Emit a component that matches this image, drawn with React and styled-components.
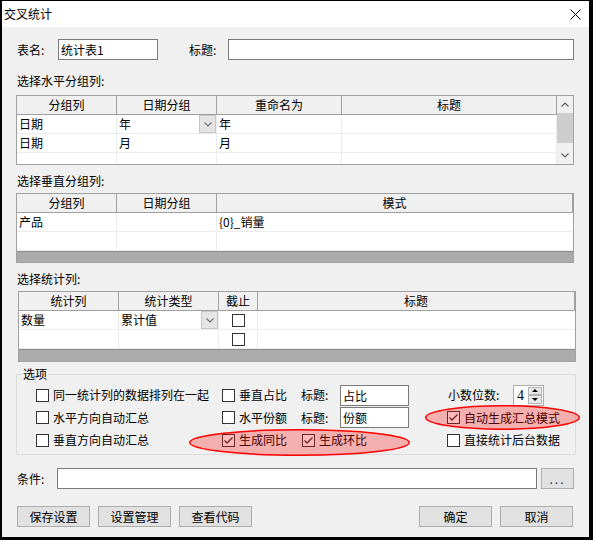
import React from 'react';
import styled, { createGlobalStyle } from 'styled-components';

const GlobalStyle = createGlobalStyle`
  html, body { margin: 0; padding: 0; background: #ffffff; }
  body {
    font-family: "Noto Sans CJK SC", "Noto Sans", sans-serif;
    font-size: 12px;
    color: #000;
  }
  *, *::before, *::after { box-sizing: border-box; }
`;

const Window = styled.div`
  position: relative;
  width: 593px;
  height: 540px;
  border-style: solid;
  border-color: #000;
  border-width: 1px 4px 3px 2px;
  background: #f0f0f0;
  display: flex;
  flex-direction: column;
  overflow: hidden;
`;

const TitleBar = styled.div`
  height: 26px;
  flex-shrink: 0;
  background: #fff;
  display: flex;
  align-items: center;
  justify-content: space-between;
  padding: 0 8px 0 2px;
`;

const Title = styled.span`
  line-height: 16px;
`;

const Body = styled.div`
  flex: 1;
  display: flex;
  flex-direction: column;
  padding: 0 15px 0 14px;
`;

const FieldRow = styled.div`
  display: flex;
  align-items: center;
  height: 21px;
  flex-shrink: 0;
  margin-top: ${p => p.$top || 0}px;
`;

const FieldLabel = styled.span`
  width: ${p => p.$w}px;
  flex-shrink: 0;
  padding-left: ${p => (p.$pad === undefined ? 1 : p.$pad)}px;
  margin-left: ${p => p.$gap || 0}px;
  line-height: 16px;
  white-space: nowrap;
`;

const TextBox = styled.input`
  width: ${p => (p.$w ? `${p.$w}px` : 'auto')};
  flex: ${p => (p.$w ? '0 0 auto' : '1 1 auto')};
  min-width: 0;
  height: 21px;
  margin: 0;
  background: #fff;
  border: 1px solid #7a7a7a;
  padding: 0 2px;
  font: inherit;
  color: #000;
  outline: none;
`;

const SectionLabel = styled.div`
  height: 16px;
  line-height: 16px;
  padding-left: 1px;
  flex-shrink: 0;
  margin: ${p => p.$top}px 0 ${p => p.$bottom}px;
`;

const GridFrame = styled.div`
  display: flex;
  width: 558px;
  height: ${p => p.$h}px;
  margin-left: ${p => p.$shift || 0}px;
  border: 1px solid #a0a0a0;
  background: #fff;
  overflow: hidden;
  flex-shrink: 0;
`;

const GridMain = styled.div`
  flex: 1;
  display: flex;
  flex-direction: column;
  min-width: 0;
`;

const GridRows = styled.div`
  display: grid;
  grid-template-columns: ${p => p.$cols};
  grid-auto-rows: 19px;
`;

const HeadCell = styled.div`
  background: #f0f0f0;
  border-right: 1px solid #a0a0a0;
  border-bottom: 1px solid #a0a0a0;
  text-align: center;
  line-height: 18px;
  white-space: nowrap;
`;

const Cell = styled.div`
  display: flex;
  align-items: center;
  justify-content: ${p => (p.$center ? 'center' : 'space-between')};
  border-right: ${p => (p.$last ? 'none' : '1px solid #ececec')};
  border-bottom: 1px solid #ececec;
  padding-left: ${p => (p.$center ? 0 : 2)}px;
  line-height: 18px;
  white-space: nowrap;
  overflow: hidden;
`;

const Band = styled.div`
  flex: 1;
  background: #ababab;
  border-top: 1px solid #8c8c8c;
`;

const ComboButton = styled.span`
  width: 17px;
  height: 18px;
  flex-shrink: 0;
  display: flex;
  align-items: center;
  justify-content: center;
  background: #e5e5e5;
  border: 1px solid #c6c6c6;
`;

const VScroll = styled.div`
  width: 16px;
  flex-shrink: 0;
  background: #f0f0f0;
  display: flex;
  flex-direction: column;
`;

const ScrollArrow = styled.div`
  height: 17px;
  display: flex;
  align-items: center;
  justify-content: center;
`;

const ScrollThumb = styled.div`
  height: 30px;
  background: #cdcdcd;
`;

const ScrollTrack = styled.div`
  flex: 1;
`;

const CheckBox = styled.span`
  width: 13px;
  height: 13px;
  flex-shrink: 0;
  display: inline-flex;
  align-items: center;
  justify-content: center;
  background: #fff;
  border: 1px solid #333;
`;

const GroupBox = styled.fieldset`
  margin: 4px 0 0;
  padding: 2px 0 3px;
  width: 560px;
  min-width: 0;
  flex-shrink: 0;
  border: 1px solid #dcdcdc;
`;

const GroupTitle = styled.legend`
  margin-left: 5px;
  padding: 0 1px;
  height: 16px;
  line-height: 16px;
`;

const OptionGrid = styled.div`
  display: grid;
  grid-template-columns: 186px 79px 146px 1fr;
  grid-template-rows: 22px 23px 22px;
  margin-left: 19px;
`;

const CheckItem = styled.label`
  display: flex;
  align-items: center;
  gap: 4px;
  padding-left: ${p => p.$pad || 0}px;
  white-space: nowrap;
  line-height: 16px;
`;

const InlineField = styled.div`
  display: flex;
  align-items: center;
`;

const SmallInput = styled.input`
  width: 69px;
  height: 21px;
  margin: 0;
  border: 1px solid #7a7a7a;
  background: #fff;
  padding: 0 2px;
  font: inherit;
  color: #000;
  outline: none;
`;

const Spinner = styled.div`
  display: flex;
  width: 31px;
  height: 21px;
  border: 1px solid #adadad;
  background: #fff;
  padding: 1px;
`;

const SpinValue = styled.span`
  flex: 1;
  font-family: "Liberation Serif", serif;
  font-size: 14px;
  line-height: 17px;
  padding-left: 2px;
`;

const SpinButtons = styled.div`
  width: 14px;
  display: flex;
  flex-direction: column;
`;

const SpinButton = styled.span`
  flex: 1;
  display: flex;
  align-items: center;
  justify-content: center;
  background: #e8e8e8;
  border: 1px solid #b4b4b4;
`;

const Annotation = styled.svg`
  position: absolute;
  left: ${p => p.$x}px;
  top: ${p => p.$y}px;
  pointer-events: none;
  overflow: visible;
`;

const DotsButton = styled.button`
  width: 33px;
  height: 21px;
  margin: 0 0 0 4px;
  padding: 0;
  flex-shrink: 0;
  background: #e1e1e1;
  border: 1px solid #adadad;
  font: inherit;
  color: #333;
  letter-spacing: 2px;
  line-height: 17px;
`;

const ButtonRow = styled.div`
  display: flex;
  gap: 8px;
  height: 21px;
  margin: 17px 1px 0 1px;
  flex-shrink: 0;
`;

const PushButton = styled.button`
  width: 73px;
  height: 21px;
  margin: 0;
  padding: 0;
  background: #e1e1e1;
  border: 1px solid #adadad;
  font: inherit;
  color: #000;
  line-height: 17px;
`;

const Spacer = styled.div`
  flex: 1;
`;

const Chevron = ({ up, color = '#606060' }) => (
  <svg width="8" height="5" viewBox="0 0 8 5">
    <polyline
      points={up ? '0.5,4.5 4,1 7.5,4.5' : '0.5,0.5 4,4 7.5,0.5'}
      fill="none"
      stroke={color}
      strokeWidth="1.2"
    />
  </svg>
);

const Triangle = ({ up }) => (
  <svg width="6" height="3" viewBox="0 0 6 3">
    <polygon points={up ? '0,3 3,0 6,3' : '0,0 6,0 3,3'} fill="#000" />
  </svg>
);

const CloseIcon = () => (
  <svg width="11" height="11" viewBox="0 0 11 11">
    <line x1="0.5" y1="0.5" x2="10.5" y2="10.5" stroke="#000" strokeWidth="1" />
    <line x1="10.5" y1="0.5" x2="0.5" y2="10.5" stroke="#000" strokeWidth="1" />
  </svg>
);

const Check = ({ checked }) => (
  <CheckBox>
    {checked && (
      <svg width="11" height="11" viewBox="0 0 11 11">
        <polyline points="1.5,5.5 4,8 9.5,2.5" fill="none" stroke="#333" strokeWidth="1.3" />
      </svg>
    )}
  </CheckBox>
);

const Combo = () => (
  <ComboButton>
    <Chevron color="#707070" />
  </ComboButton>
);

const Ellipse = ({ x, y, w, h }) => (
  <Annotation $x={x} $y={y} width={w} height={h}>
    <ellipse
      cx={w / 2}
      cy={h / 2}
      rx={w / 2 - 0.75}
      ry={h / 2 - 0.75}
      fill="rgba(255,0,0,0.27)"
      stroke="#ff0000"
      strokeWidth="1.5"
    />
  </Annotation>
);

const App = () => (
  <>
    <GlobalStyle />
    <Window>
      <TitleBar>
        <Title>交叉统计</Title>
        <CloseIcon />
      </TitleBar>
      <Body>
        <FieldRow $top={12}>
          <FieldLabel $w={42}>表名:</FieldLabel>
          <TextBox $w={100} defaultValue="统计表1" />
          <FieldLabel $w={39} $gap={31} $pad={0}>标题:</FieldLabel>
          <TextBox defaultValue="" />
        </FieldRow>

        <SectionLabel $top={13} $bottom={6}>选择水平分组列:</SectionLabel>
        <GridFrame $h={70}>
          <GridMain>
            <GridRows $cols="100px 100px 125px 215px">
              <HeadCell>分组列</HeadCell>
              <HeadCell>日期分组</HeadCell>
              <HeadCell>重命名为</HeadCell>
              <HeadCell>标题</HeadCell>
              <Cell>日期</Cell>
              <Cell>年<Combo /></Cell>
              <Cell>年</Cell>
              <Cell />
              <Cell>日期</Cell>
              <Cell>月</Cell>
              <Cell>月</Cell>
              <Cell />
              <Cell />
              <Cell />
              <Cell />
              <Cell />
            </GridRows>
          </GridMain>
          <VScroll>
            <ScrollArrow><Chevron up /></ScrollArrow>
            <ScrollThumb />
            <ScrollTrack />
            <ScrollArrow><Chevron /></ScrollArrow>
          </VScroll>
        </GridFrame>

        <SectionLabel $top={8} $bottom={4}>选择垂直分组列:</SectionLabel>
        <GridFrame $h={70}>
          <GridMain>
            <GridRows $cols="100px 100px 1fr">
              <HeadCell>分组列</HeadCell>
              <HeadCell>日期分组</HeadCell>
              <HeadCell>模式</HeadCell>
              <Cell>产品</Cell>
              <Cell />
              <Cell $last>{'{0}_销量'}</Cell>
              <Cell />
              <Cell />
              <Cell $last />
            </GridRows>
            <Band />
          </GridMain>
        </GridFrame>

        <SectionLabel $top={8} $bottom={4}>选择统计列:</SectionLabel>
        <GridFrame $h={71} $shift={2}>
          <GridMain>
            <GridRows $cols="100px 100px 39px 1fr">
              <HeadCell>统计列</HeadCell>
              <HeadCell>统计类型</HeadCell>
              <HeadCell>截止</HeadCell>
              <HeadCell>标题</HeadCell>
              <Cell>数量</Cell>
              <Cell>累计值<Combo /></Cell>
              <Cell $center><Check /></Cell>
              <Cell $last />
              <Cell />
              <Cell />
              <Cell $center><Check /></Cell>
              <Cell $last />
            </GridRows>
            <Band />
          </GridMain>
        </GridFrame>

        <GroupBox>
          <GroupTitle>选项</GroupTitle>
          <OptionGrid>
            <CheckItem><Check />同一统计列的数据排列在一起</CheckItem>
            <CheckItem><Check />垂直占比</CheckItem>
            <InlineField>
              <FieldLabel $w={39} $pad={0}>标题:</FieldLabel>
              <SmallInput defaultValue="占比" />
            </InlineField>
            <InlineField>
              <FieldLabel $w={66}>小数位数:</FieldLabel>
              <Spinner>
                <SpinValue>4</SpinValue>
                <SpinButtons>
                  <SpinButton><Triangle up /></SpinButton>
                  <SpinButton><Triangle /></SpinButton>
                </SpinButtons>
              </Spinner>
            </InlineField>

            <CheckItem><Check />水平方向自动汇总</CheckItem>
            <CheckItem><Check />水平份额</CheckItem>
            <InlineField>
              <FieldLabel $w={39} $pad={0}>标题:</FieldLabel>
              <SmallInput defaultValue="份额" />
            </InlineField>
            <CheckItem><Check checked />自动生成汇总模式</CheckItem>

            <CheckItem><Check />垂直方向自动汇总</CheckItem>
            <CheckItem><Check checked />生成同比</CheckItem>
            <CheckItem $pad={1}><Check checked />生成环比</CheckItem>
            <CheckItem><Check />直接统计后台数据</CheckItem>
          </OptionGrid>
        </GroupBox>

        <FieldRow $top={13}>
          <FieldLabel $w={41}>条件:</FieldLabel>
          <TextBox defaultValue="" />
          <DotsButton>...</DotsButton>
        </FieldRow>

        <ButtonRow>
          <PushButton>保存设置</PushButton>
          <PushButton>设置管理</PushButton>
          <PushButton>查看代码</PushButton>
          <Spacer />
          <PushButton>确定</PushButton>
          <PushButton>取消</PushButton>
        </ButtonRow>
      </Body>

      <Ellipse x={187} y={428} w={221} h={27} />
      <Ellipse x={423} y={404} w={155} h={25} />
    </Window>
  </>
);

export default App;
